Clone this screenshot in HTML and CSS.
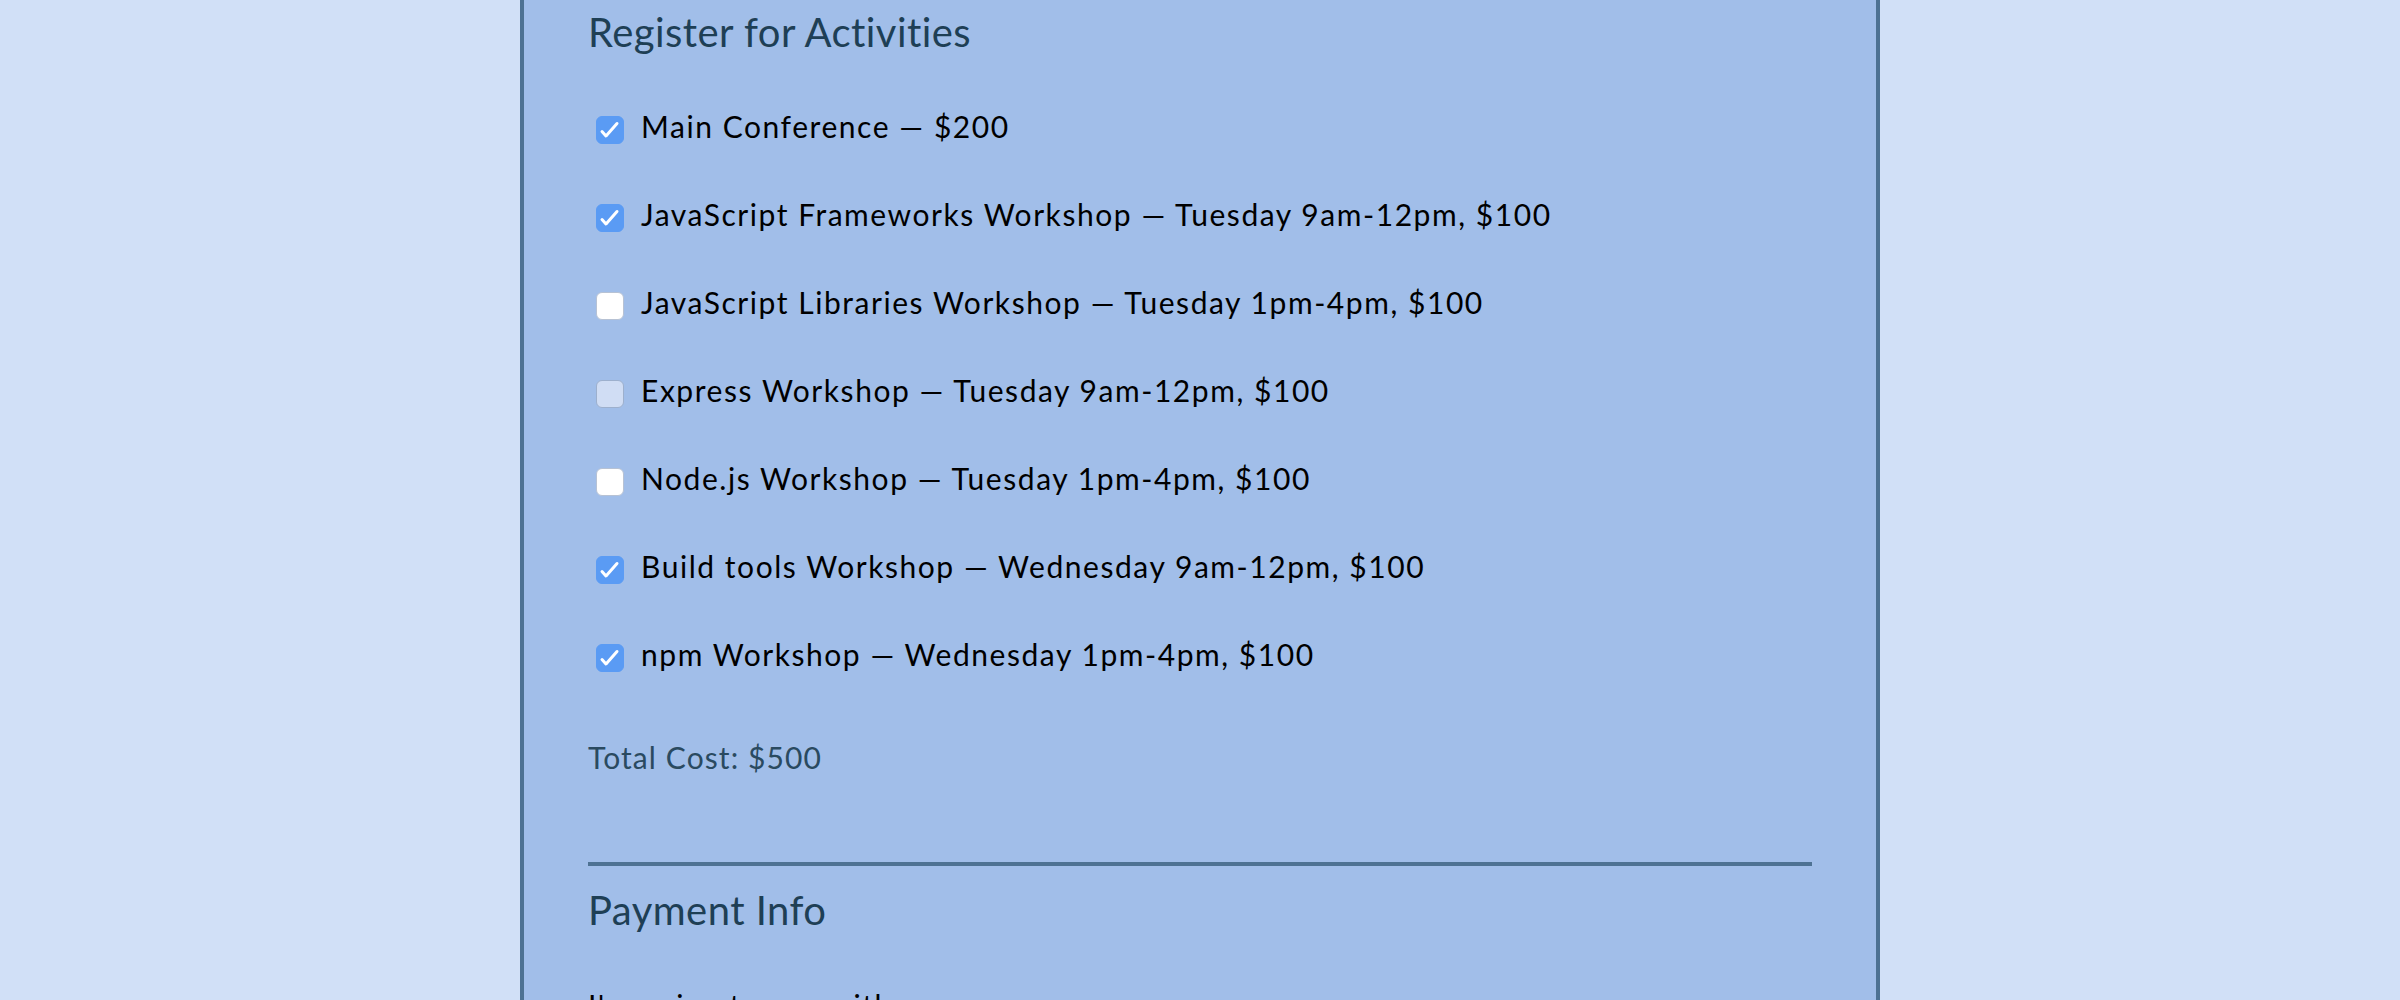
FILE: index.html
```html
<!DOCTYPE html>
<html lang="en">
<head>
<meta charset="utf-8">
<title>Register for Activities</title>
<link rel="stylesheet" href="styles.css">
</head>
<body>
<main class="panel">
  <section class="activities">
    <h2 class="legend">Register for Activities</h2>
    <ul class="list">
      <li class="row"><span class="box checked"><svg viewBox="0 0 28 28" width="28" height="28"><path d="M6 15.5 L10 20 L21 7.5" fill="none" stroke="#fff" stroke-width="3" stroke-linecap="round" stroke-linejoin="round"/></svg></span><span class="label">Main Conference — $200</span></li>
      <li class="row"><span class="box checked"><svg viewBox="0 0 28 28" width="28" height="28"><path d="M6 15.5 L10 20 L21 7.5" fill="none" stroke="#fff" stroke-width="3" stroke-linecap="round" stroke-linejoin="round"/></svg></span><span class="label">JavaScript Frameworks Workshop — Tuesday 9am-12pm, $100</span></li>
      <li class="row"><span class="box"></span><span class="label">JavaScript Libraries Workshop — Tuesday 1pm-4pm, $100</span></li>
      <li class="row"><span class="box disabled"></span><span class="label">Express Workshop — Tuesday 9am-12pm, $100</span></li>
      <li class="row"><span class="box"></span><span class="label">Node.js Workshop — Tuesday 1pm-4pm, $100</span></li>
      <li class="row"><span class="box checked"><svg viewBox="0 0 28 28" width="28" height="28"><path d="M6 15.5 L10 20 L21 7.5" fill="none" stroke="#fff" stroke-width="3" stroke-linecap="round" stroke-linejoin="round"/></svg></span><span class="label">Build tools Workshop — Wednesday 9am-12pm, $100</span></li>
      <li class="row"><span class="box checked"><svg viewBox="0 0 28 28" width="28" height="28"><path d="M6 15.5 L10 20 L21 7.5" fill="none" stroke="#fff" stroke-width="3" stroke-linecap="round" stroke-linejoin="round"/></svg></span><span class="label">npm Workshop — Wednesday 1pm-4pm, $100</span></li>
    </ul>
    <p class="total">Total Cost: $500</p>
  </section>
  <hr class="rule">
  <section class="payment">
    <h2 class="legend">Payment Info</h2>
    <p class="paywith">I'm going to pay with:</p>
  </section>
</main>
</body>
</html>
```
FILE: styles.css
```css
html, body {
  margin: 0;
  padding: 0;
}
body {
  background: #d1e0f7;
  font-family: Lato, "Open Sans", sans-serif;
  height: 1000px;
  overflow: hidden;
}
.panel {
  box-sizing: border-box;
  width: 1360px;
  min-height: 1000px;
  margin: 0 auto;
  background: #a1bee9;
  border-left: 4px solid #4e7293;
  border-right: 4px solid #4e7293;
  padding: 8px 64px 0;
}
.legend {
  margin: 0;
  font-size: 40px;
  line-height: 48px;
  font-weight: 400;
  letter-spacing: 0.45px;
  color: #1e3f55;
}
.list {
  list-style: none;
  margin: 26px 0 0;
  padding: 0;
}
.row {
  display: flex;
  align-items: center;
  height: 88px;
  font-size: 30px;
  line-height: 36px;
  letter-spacing: 1.55px;
  color: #000;
}
.box {
  box-sizing: border-box;
  width: 28px;
  height: 28px;
  margin: 8px 17px 0 8px;
  border-radius: 6px;
  background: #fff;
  border: 1px solid #b7c2d4;
  flex: none;
  display: flex;
}
.box.checked {
  background: #5a9bf4;
  border-color: #5a9bf4;
}
.box.checked svg {
  margin: -1px;
}
.box.disabled {
  background: #d0ddf4;
  border-color: #9db0cd;
}
.total {
  margin: 41px 0 0;
  font-size: 30px;
  line-height: 36px;
  letter-spacing: 1.1px;
  color: #2a4a60;
}
.rule {
  margin: 87px 0 0;
  border: 0;
  height: 4px;
  background: #4e7293;
}
.payment .legend {
  margin-top: 20px;
}
.paywith {
  margin: 53px 0 0;
  font-size: 30px;
  line-height: 36px;
  letter-spacing: 1.5px;
  color: #000;
}
```
